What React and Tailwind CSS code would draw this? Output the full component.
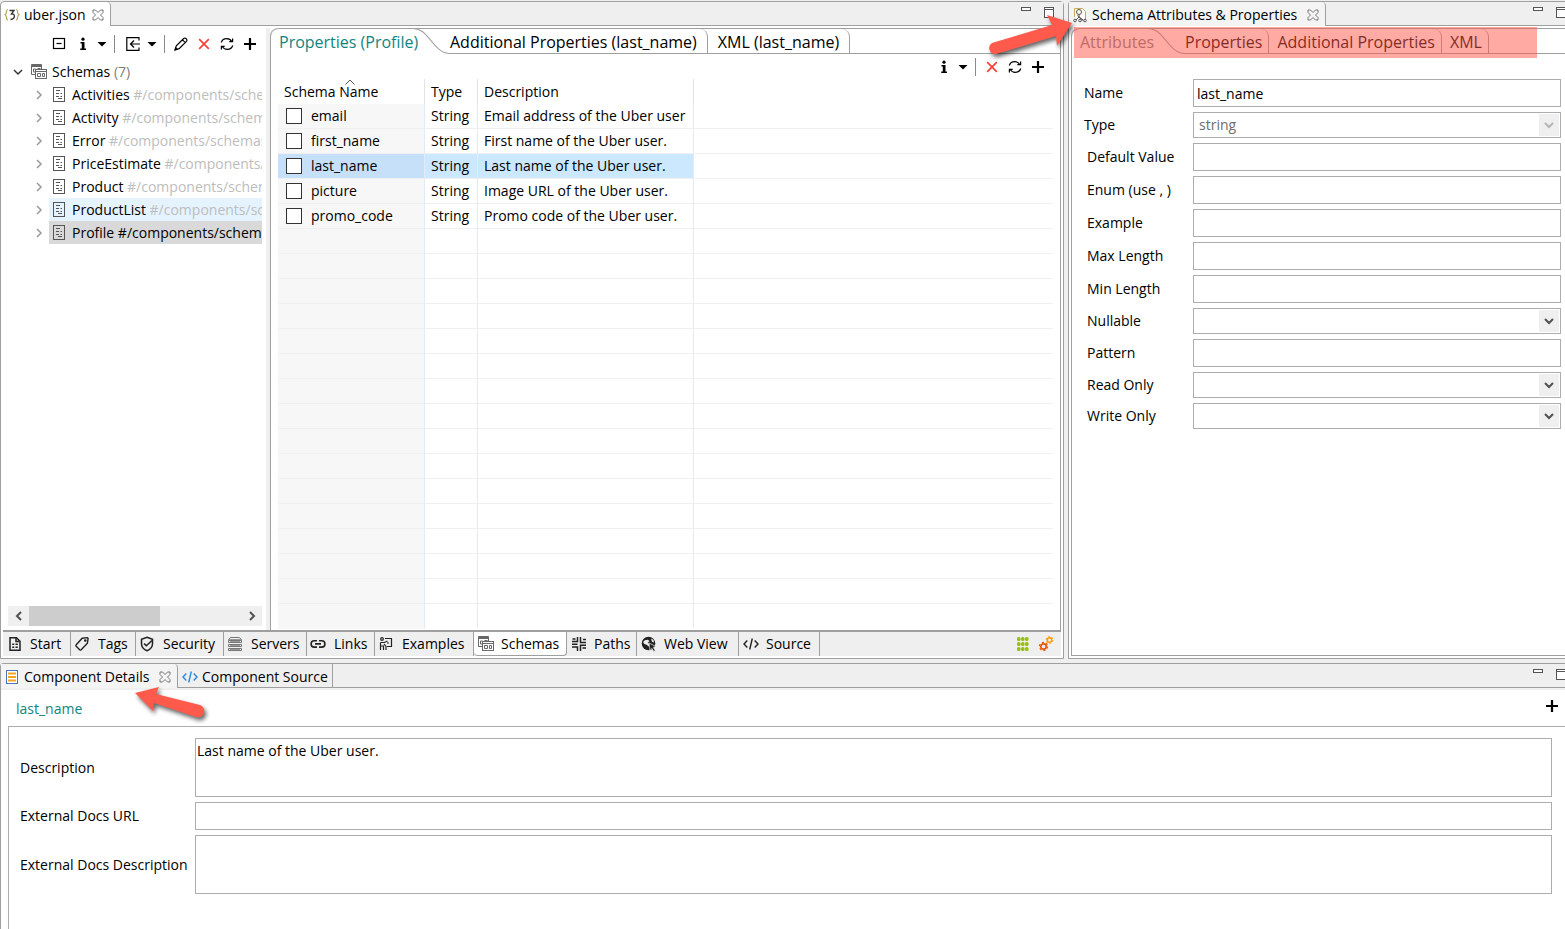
import React, { useState } from 'react';
import clsx from 'clsx';

const schemas = [
  { name: 'Activities', state: '' },
  { name: 'Activity', state: '' },
  { name: 'Error', state: '' },
  { name: 'PriceEstimate', state: '' },
  { name: 'Product', state: '' },
  { name: 'ProductList', state: 'hover' },
  { name: 'Profile', state: 'selected' },
];

const properties = [
  { name: 'email', type: 'String', description: 'Email address of the Uber user' },
  { name: 'first_name', type: 'String', description: 'First name of the Uber user.' },
  { name: 'last_name', type: 'String', description: 'Last name of the Uber user.' },
  { name: 'picture', type: 'String', description: 'Image URL of the Uber user.' },
  { name: 'promo_code', type: 'String', description: 'Promo code of the Uber user.' },
];

const EMPTY_ROWS = 16;

const attributeFields = [
  { id: 'default', label: 'Default Value', kind: 'text' },
  { id: 'enum', label: 'Enum (use , )', kind: 'text' },
  { id: 'example', label: 'Example', kind: 'text' },
  { id: 'maxLength', label: 'Max Length', kind: 'text' },
  { id: 'minLength', label: 'Min Length', kind: 'text' },
  { id: 'nullable', label: 'Nullable', kind: 'select' },
  { id: 'pattern', label: 'Pattern', kind: 'text' },
  { id: 'readOnly', label: 'Read Only', kind: 'select' },
  { id: 'writeOnly', label: 'Write Only', kind: 'select' },
];

/* ---------- icons ---------- */

const Icon = ({ children, className, ...rest }) => (
  <svg
    width="16"
    height="16"
    viewBox="0 0 16 16"
    fill="none"
    stroke="currentColor"
    aria-hidden="true"
    className={clsx('block shrink-0', className)}
    {...rest}
  >
    {children}
  </svg>
);

const CollapseIcon = () => (
  <Icon strokeWidth="1.2">
    <rect x="2.5" y="2.5" width="11" height="10" />
    <path d="M5.500 7.500h5" />
  </Icon>
);

const InfoIcon = () => (
  <Icon fill="currentColor" stroke="none">
    <circle cx="8" cy="3.2" r="1.6" />
    <path d="M5.5 6h4v6.5H11V14H5.2v-1.5h1.6v-5H5.5z" />
  </Icon>
);

const CaretIcon = () => (
  <svg width="10" height="16" viewBox="0 0 10 16" aria-hidden="true" className="block">
    <path d="M.5 6h9L5 10.5z" fill="currentColor" />
  </svg>
);

const ImportIcon = () => (
  <Icon strokeWidth="1.2">
    <path d="M14 4.5V1.7H1.8v12.6H14v-2.8M15 8H6M9 4.5L5.5 8 9 11.5" />
  </Icon>
);

const PencilIcon = () => (
  <Icon strokeWidth="1.2">
    <path d="M2.3 13.7l1-3.8 7.4-7.4c.7-.7 1.6-.6 2.2 0l.6.6c.6.6.6 1.5 0 2.2l-7.4 7.4zM9.5 3.8l2.8 2.8" />
    <path d="M2 14l2-.6L2.6 12z" fill="currentColor" />
  </Icon>
);

const DeleteIcon = () => (
  <Icon stroke="#f44336" strokeWidth="1.7">
    <path d="M3.2 3.2l9.6 9.6M12.8 3.2l-9.6 9.6" />
  </Icon>
);

const RefreshIcon = () => (
  <Icon strokeWidth="1.2">
    <path d="M2.3 6.5C3 4 5.2 2.7 7.8 2.7c2.2 0 3.9 1 5 2.8M13.7 9.5c-.7 2.5-2.9 3.8-5.5 3.8-2.2 0-3.9-1-5-2.8" />
    <path d="M13.6 2.4v3.3h-3.300M2.4 13.6v-3.300h3.3" />
  </Icon>
);

const PlusIcon = () => (
  <Icon strokeWidth="2.2">
    <path d="M8 2v12M2 8h12" />
  </Icon>
);

const SchemasIcon = () => (
  <Icon stroke="#686868" strokeWidth="1">
    <path d="M4 10.5H.5v-10h10V5" />
    <path d="M.5 1.5h10M.5 2.5h10M2.5 5h2v3h-2zM6.5 4.5h3" />
    <rect x="4.5" y="5.5" width="11" height="9" fill="#fff" />
    <path d="M4.5 7.5h11M6.5 9.5h3v3h-3zM11.500 9.5h2v3h-2z" />
  </Icon>
);

const DocIcon = () => (
  <Icon stroke="#555" strokeWidth="1">
    <rect x="2.5" y=".5" width="11" height="14" />
    <path d="M5 3.5h4M5 6.5h3M9.5 6.5h1.5M5 9.5h3M9.5 9.5h1.5M7 11.5h4" />
  </Icon>
);

const JsonIcon = () => (
  <Icon>
    <path d="M4 2.5c-1.500 0-1.500.5-1.500 2s0 2.500-1.500 3.200C2.500 8.500 2.500 9.500 2.500 11s0 2 1.500 2M12 2.500c1.500 0 1.500.5 1.500 2s0 2.500 1.500 3.200c-1.500.8-1.500 1.800-1.500 3.300s0 2-1.500 2" stroke="#b0a558" strokeWidth="1.200" />
    <path d="M5.500 3.500h4.500L7.500 7c4-.5 4 5-1 5.500" stroke="#333" strokeWidth="1.300" />
  </Icon>
);

const CloseTabIcon = () => (
  <svg width="12" height="12" viewBox="0 0 12 12" fill="none" stroke="#777" aria-hidden="true" className="block">
    <path d="M1 1h2.500L6 3.500 8.500 1H11v2.500L8.500 6 11 8.500V11H8.500L6 8.500 3.500 11H1V8.500L3.500 6 1 3.500z" />
  </svg>
);

const StartIcon = () => (
  <Icon strokeWidth="1.500" stroke="#222">
    <path d="M3 1.700h6.500L13 5.200v9.100H3z" />
    <path d="M9 2v3.500h3.500M5.200 8.200h2M8.500 8.200h2.300M5.200 11.200h2M8.500 11.200h2.300" />
  </Icon>
);

const TagIcon = () => (
  <Icon strokeWidth="1.400" stroke="#222" className="-ml-px">
    <path d="M8.200 2.200l5-.6c.6 0 .9.300.9.900l-.7 4.700-6.200 6.500c-.5.500-1 .5-1.500 0L2.200 10.300c-.5-.5-.5-1 0-1.500z" />
    <circle cx="11.300" cy="4.500" r=".6" />
  </Icon>
);

const ShieldIcon = () => (
  <Icon strokeWidth="1.500" stroke="#222" className="-ml-px">
    <path d="M8 1.200l5.500 2v4.500c0 3.500-2.300 5.700-5.500 7-3.200-1.300-5.500-3.500-5.500-7V3.200z" />
    <path d="M5 7.500l2.300 2.300L13 4.500" />
  </Icon>
);

const ServersIcon = () => (
  <Icon stroke="#777" strokeWidth="1" className="-ml-px">
    <path d="M3.500 1.500h9l2 2.500h-13zM1.500 4.500h13v2h-13zM1.500 8.500h13v2h-13zM1.500 12.500h13v2h-13z" />
    <path d="M3 3.500h10M3 5.500h10M3 9.500h10M3 13.500h10" stroke="#999" />
  </Icon>
);

const LinkIcon = () => (
  <Icon strokeWidth="1.600" stroke="#222" className="-ml-px">
    <path d="M7 4.700H4.300a3.200 3.200 0 000 6.400H7M9 4.700h2.700a3.200 3.200 0 010 6.400H9M5 7.900h6" />
  </Icon>
);

const ExamplesIcon = () => (
  <Icon strokeWidth="1.200" stroke="#222" className="-ml-px">
    <circle cx="4" cy="3" r="1.300" />
    <path d="M7 2.500h6.500v8H9M2.500 6.500h4l3-1.500M2.500 6.500V10h3v4M2.500 10v4M6 8l2 2.500V14M9 7h2" />
  </Icon>
);

const PathsIcon = () => (
  <Icon strokeWidth="1.500" stroke="#222">
    <path d="M6.500 1v4.500H1M1.500 3h3M9.500 1v5.500H15M12 3.500h3M1 8.200h5.500M1 11h5.500v4M9.500 15V9.200H15M11.500 12H15" />
  </Icon>
);

const WebIcon = () => (
  <Icon stroke="none">
    <circle cx="7.500" cy="7.500" r="6.800" fill="#222" />
    <path d="M3.500 4.500c1.500-1 2.500-.5 3.500-.8l1.500 1.500-1.800 1.500 2 1.600-1 2.200L6 9 3 7.800 2.200 6zM10 2.500l2.500 1.500.5 2.500-2-.8z" fill="#efefef" />
    <path d="M8 7l7 3.500-2.700.9 2 3-1.500 1-2-3L9 14.500z" fill="#222" stroke="#efefef" strokeWidth=".7" />
  </Icon>
);

const CodeIcon = ({ color = '#222' }) => (
  <Icon strokeWidth="1.400" stroke={color}>
    <path d="M4.300 4.500L1 8l3.300 3.500M11.700 4.500L15 8l-3.300 3.500M9.300 2.500l-2.600 11" />
  </Icon>
);

const DetailsIcon = () => (
  <Icon>
    <rect x="2.500" y="1.500" width="11" height="13" fill="#fff" stroke="#4a76b8" />
    <path d="M4 4.500h8M4 8h8M4 11.500h8" stroke="#f5a623" strokeWidth="2" />
  </Icon>
);

const AttributesIcon = () => (
  <Icon strokeWidth="1">
    <path d="M2.500 10V1.500h8l3 3V12" stroke="#c9a85c" fill="#fffdf5" />
    <circle cx="7" cy="5" r="2.500" stroke="#555" />
    <path d="M7 7.500v3M4 13l3-3 4 3M5.500 8.500l6 5.500" stroke="#555" />
    <circle cx="3" cy="13.500" r="1.300" stroke="#555" />
    <circle cx="8" cy="13.500" r="1.300" stroke="#555" />
    <circle cx="13" cy="13.500" r="1.300" stroke="#555" />
  </Icon>
);

const GridIcon = () => (
  <Icon stroke="none" fill="#97bf0d">
    {[3, 8, 13].map((y) => [4, 8, 12].map((x) => <rect key={`${x}-${y}`} x={x - 2} y={y - 2} width="3.500" height="4" rx="1.500" />))}
  </Icon>
);

const GearsIcon = () => (
  <Icon>
    <circle cx="5.500" cy="10.500" r="2.700" stroke="#e8590c" strokeWidth="1.700" />
    <circle cx="5.500" cy="10.500" r="4" stroke="#e8590c" strokeWidth="1.300" strokeDasharray="2.100 2.090" />
    <circle cx="11.500" cy="4" r="2.200" stroke="#ff9d0a" strokeWidth="1.400" />
    <circle cx="11.500" cy="4" r="3.300" stroke="#ff9d0a" strokeWidth="1.100" strokeDasharray="1.730 1.730" />
  </Icon>
);

const ChevronIcon = ({ dir = 'right', className }) => (
  <svg width="12" height="12" viewBox="0 0 12 12" fill="none" stroke="currentColor" strokeWidth="1.500" aria-hidden="true" className={clsx('block shrink-0', className)}>
    {dir === 'right' && <path d="M4 2l4 4-4 4" />}
    {dir === 'left' && <path d="M8 2L4 6l4 4" />}
    {dir === 'down' && <path d="M2 4l4 4 4-4" />}
  </svg>
);

/* ---------- shared parts ---------- */

const Separator = () => <span className="h-[18px] w-px shrink-0 bg-[#8a8a8a]" />;

const ToolButton = ({ label, children, narrow }) => (
  <button type="button" aria-label={label} className={clsx('flex h-5 shrink-0 items-center justify-center', narrow ? 'w-4' : 'w-[23px]')}>
    {children}
  </button>
);

const WindowButtons = ({ className }) => (
  <div className={clsx('ml-auto flex shrink-0 items-start gap-[13px] pt-[5px]', className)}>
    <button type="button" aria-label="Minimize" className="h-1 w-[10px] border border-[#555] bg-white" />
    <button type="button" aria-label="Maximize" className="flex h-[11px] w-[10px] flex-col border border-[#555] bg-white pt-px">
      <span className="block h-px w-full bg-[#555]" />
    </button>
  </div>
);

// Slanted edge between the selected tab and its neighbour
const TabCurve = () => (
  <svg width="37" height="25" viewBox="0 0 37 25" fill="none" stroke="#9f9f9f" aria-hidden="true" className="-mt-px -mb-px block h-[26px] shrink-0" preserveAspectRatio="none">
    <path d="M0 .5C7 .5 11 4 17 11S28 24.500 37 24.500" />
  </svg>
);

const FolderTabs = ({ tabs, active, onSelect, activeClass, firstWidth, endPad, startPad }) => (
  <div role="tablist" className="flex h-[26px] shrink-0 rounded-tl-lg border-t border-[#9f9f9f] text-[16px] leading-6 whitespace-nowrap">
    {tabs.map((tab, index) => (
      <React.Fragment key={tab}>
        <button
          type="button"
          role="tab"
          aria-selected={active === index}
          onClick={() => onSelect(index)}
          className={clsx(
            'shrink-0 text-left',
            index === 0 ? clsx('pl-2', firstWidth, activeClass) : clsx('rounded-tr-lg border-r border-b border-[#9f9f9f] pt-px', endPad),
            index > 1 && startPad
          )}
        >
          {tab}
        </button>
        {index === 0 && <TabCurve />}
      </React.Fragment>
    ))}
    <div className="flex-1 border-b border-[#9f9f9f]" />
  </div>
);

const TextField = ({ id, label, value }) => (
  <div className="flex items-center">
    <label htmlFor={id} className="w-[109px] shrink-0">{label}</label>
    <input id={id} type="text" defaultValue={value} className="h-7 min-w-0 flex-1 border border-[#abadb3] bg-white px-[3px] outline-none" />
  </div>
);

const SelectField = ({ id, label, value, disabled }) => (
  <div className="flex items-center">
    <label htmlFor={id} className="w-[109px] shrink-0">{label}</label>
    <div className="relative h-[26px] min-w-0 flex-1 border border-[#abadb3] bg-white">
      <select id={id} disabled={disabled} defaultValue={value} className="h-full w-full appearance-none px-[5px] text-black outline-none disabled:text-[#6d6d6d] disabled:opacity-100">
        {value ? <option>{value}</option> : <option value="" />}
        {!value && <option>true</option>}
        {!value && <option>false</option>}
      </select>
      <span className={clsx('pointer-events-none absolute top-px right-px bottom-px flex w-5 items-center justify-center bg-[#efefef]', disabled ? 'text-[#b5b5b5]' : 'text-[#505050]')}>
        <ChevronIcon dir="down" className="stroke-2" />
      </span>
    </div>
  </div>
);

/* ---------- schema tree ---------- */

const SchemaTree = () => (
  <aside className="flex w-[261px] shrink-0 flex-col overflow-hidden pl-[7px]">
    <div className="flex h-[34px] items-center justify-end pt-[2px] pr-px">
      <ToolButton label="Collapse all"><CollapseIcon /></ToolButton>
      <span className="w-px" />
      <ToolButton label="Info"><InfoIcon /></ToolButton>
      <ToolButton label="Info menu" narrow><CaretIcon /></ToolButton>
      <span className="w-1" />
      <Separator />
      <span className="w-[6px]" />
      <ToolButton label="Import"><ImportIcon /></ToolButton>
      <ToolButton label="Import menu" narrow><CaretIcon /></ToolButton>
      <span className="w-1" />
      <Separator />
      <span className="w-1" />
      <ToolButton label="Edit"><PencilIcon /></ToolButton>
      <ToolButton label="Delete"><DeleteIcon /></ToolButton>
      <ToolButton label="Refresh"><RefreshIcon /></ToolButton>
      <ToolButton label="Add"><PlusIcon /></ToolButton>
    </div>
    <ul className="flex-1 whitespace-nowrap">
      <li className="flex h-[23px] items-center pl-1">
        <ChevronIcon dir="down" className="text-[#333]" />
        <span className="w-[7px]" />
        <SchemasIcon />
        <span className="pl-[5px]">
          Schemas <span className="text-[#808080]">(7)</span>
        </span>
      </li>
      {schemas.map((schema) => (
        <li key={schema.name} className="flex h-[23px] items-center pl-[25px]">
          <ChevronIcon className="text-[#999]" />
          <div
            className={clsx(
              'ml-1 flex h-full min-w-0 flex-1 items-center overflow-hidden pl-[2px]',
              schema.state === 'hover' && 'bg-[#e5f3ff]',
              schema.state === 'selected' && 'bg-[#d9d9d9]'
            )}
          >
            <DocIcon />
            <span className="pl-[5px]">
              {schema.name}{' '}
              <span className={schema.state === 'selected' ? 'text-black' : 'text-[#bdbdbd]'}>#/components/schemas</span>
            </span>
          </div>
        </li>
      ))}
    </ul>
    <div className="mb-1 flex h-5 items-center bg-[#efefef] text-[#505050]">
      <button type="button" aria-label="Scroll left" className="flex w-[21px] justify-center"><ChevronIcon dir="left" className="stroke-2" /></button>
      <div className="flex h-full flex-1">
        <div className="h-full w-[62%] bg-[#cdcdcd]" />
      </div>
      <button type="button" aria-label="Scroll right" className="flex w-[21px] justify-center"><ChevronIcon className="stroke-2" /></button>
    </div>
  </aside>
);

/* ---------- properties table ---------- */

const PropertiesTable = () => (
  <table className="w-full table-fixed border-separate border-spacing-0 text-left">
    <colgroup>
      <col className="w-[147px]" />
      <col className="w-[53px]" />
      <col className="w-[216px]" />
      <col />
    </colgroup>
    <thead>
      <tr className="h-[25px]">
        <th className="relative border-r border-[#e3e3e3] p-0 pl-[6px] font-normal">
          Schema Name
          <svg width="10" height="6" viewBox="0 0 10 6" fill="none" stroke="#555" aria-hidden="true" className="absolute top-0 left-[46%]">
            <path d="M.5 5.500L5 1l4.500 4.500" />
          </svg>
        </th>
        <th className="border-r border-[#e3e3e3] p-0 pl-[6px] font-normal">Type</th>
        <th className="border-r border-[#e3e3e3] p-0 pl-[6px] font-normal">Description</th>
        <th className="p-0" />
      </tr>
    </thead>
    <tbody>
      {properties.map((property) => {
        const selected = property.name === 'last_name';
        return (
          <tr key={property.name} className="h-[25px] whitespace-nowrap">
            <td className={clsx('border-r border-b border-r-[#e3ebf7] border-b-[#f0f0f0] p-0', selected ? 'bg-[#c5e0f8]' : 'bg-[#f7f7f7]')}>
              <label className="flex items-center gap-[9px] pl-2">
                <input type="checkbox" className="h-4 w-4 shrink-0 appearance-none border border-[#333] bg-white checked:bg-[#0078d7]" />
                {property.name}
              </label>
            </td>
            <td className={clsx('border-r border-b border-r-[#e3ebf7] border-b-[#f0f0f0] p-0 pl-[6px]', selected && 'bg-[#cce8ff]')}>{property.type}</td>
            <td className={clsx('border-r border-b border-r-[#e3ebf7] border-b-[#f0f0f0] p-0 pl-[6px]', selected && 'bg-[#cce8ff]')}>{property.description}</td>
            <td className="border-b border-[#f0f0f0] p-0" />
          </tr>
        );
      })}
      {Array.from({ length: EMPTY_ROWS }, (_, i) => (
        <tr key={i} className="h-[25px] last:[&_td]:border-b-transparent">
          <td className="border-r border-b border-r-[#e3ebf7] border-b-[#f0f0f0] bg-[#f7f7f7] p-0" />
          <td className="border-r border-b border-r-[#e3ebf7] border-b-[#f0f0f0] p-0" />
          <td className="border-r border-b border-r-[#e3ebf7] border-b-[#f0f0f0] p-0" />
          <td className="border-b border-[#f0f0f0] p-0" />
        </tr>
      ))}
    </tbody>
  </table>
);

/* ---------- editor ---------- */

const editorPages = [
  { label: 'Start', icon: StartIcon, width: 'w-[68px]' },
  { label: 'Tags', icon: TagIcon, width: 'w-[65px]' },
  { label: 'Security', icon: ShieldIcon, width: 'w-[88px]' },
  { label: 'Servers', icon: ServersIcon, width: 'w-[83px]' },
  { label: 'Links', icon: LinkIcon, width: 'w-[68px]' },
  { label: 'Examples', icon: ExamplesIcon, width: 'w-[99px]' },
  { label: 'Schemas', icon: SchemasIcon, width: 'w-[93px]' },
  { label: 'Paths', icon: PathsIcon, width: 'w-[70px]' },
  { label: 'Web View', icon: WebIcon, width: 'w-[102px]' },
  { label: 'Source', icon: CodeIcon, width: 'w-[81px]' },
];

const Editor = () => {
  const [tab, setTab] = useState(0);
  const [page, setPage] = useState('Schemas');

  return (
    <section className="flex min-w-0 flex-col rounded-t border border-[#9f9f9f] bg-white">
      <div className="flex h-6 shrink-0">
        <div className="flex items-center rounded-tr border-r border-[#9f9f9f] pt-px pr-[6px] pl-[3px]">
          <JsonIcon />
          <span className="pr-[6px] pl-1">uber.json</span>
          <button type="button" aria-label="Close uber.json"><CloseTabIcon /></button>
        </div>
        <div className="flex flex-1 border-b border-[#9f9f9f] bg-[#efefef]">
          <WindowButtons className="pr-[9px]" />
        </div>
      </div>

      <div className="flex flex-1">
        <SchemaTree />
        <div className="mt-[2px] ml-1 flex min-w-0 flex-1 flex-col border-l-4 border-[#efefef] pr-[2px]">
          <div className="flex flex-1 flex-col rounded-tl-lg border-r border-l border-[#9f9f9f]">
            <FolderTabs
              tabs={['Properties (Profile)', 'Additional Properties (last_name)', 'XML (last_name)']}
              active={tab}
              onSelect={setTab}
              activeClass="text-[#0f8580]"
              firstWidth="w-[142px]"
              startPad="pl-[10px]"
              endPad="pr-[10px]"
            />
            <div className="flex h-[25px] items-center justify-end pr-[11px]">
              <ToolButton label="Info"><InfoIcon /></ToolButton>
              <ToolButton label="Info menu" narrow><CaretIcon /></ToolButton>
              <span className="w-1" />
              <Separator />
              <span className="w-1" />
              <ToolButton label="Delete"><DeleteIcon /></ToolButton>
              <ToolButton label="Refresh"><RefreshIcon /></ToolButton>
              <ToolButton label="Add"><PlusIcon /></ToolButton>
            </div>
            <div className="px-[7px] pb-px">
              <PropertiesTable />
            </div>
          </div>
        </div>
      </div>

      <div className="mx-[2px] mb-[2px] flex h-[26px] shrink-0 border-t-2 border-[#9f9f9f] bg-[#efefef]">
        {editorPages.map(({ label, icon: PageIcon, width }) => (
          <button
            key={label}
            type="button"
            onClick={() => setPage(label)}
            className={clsx(
              'flex shrink-0 items-center border-r border-[#9f9f9f] pl-1 whitespace-nowrap',
              width,
              page === label && 'rounded-b-sm border-b bg-white'
            )}
          >
            <span className="w-[23px]"><PageIcon /></span>
            {label}
          </button>
        ))}
        <div className="ml-auto flex items-center gap-[7px] pr-[7px]">
          <button type="button" aria-label="Palette"><GridIcon /></button>
          <button type="button" aria-label="Settings"><GearsIcon /></button>
        </div>
      </div>
    </section>
  );
};

/* ---------- attributes view ---------- */

const AttributesView = () => {
  const [tab, setTab] = useState(0);

  return (
    <section className="flex min-w-0 flex-col rounded-tl border border-r-0 border-[#9f9f9f] bg-white">
      <div className="flex h-6 shrink-0 overflow-hidden">
        <div className="flex shrink-0 items-center rounded-tr border-r border-[#9f9f9f] bg-[#f4f4f4] pt-px pr-[6px] pl-[3px] whitespace-nowrap">
          <AttributesIcon />
          <span className="pr-[10px] pl-1">Schema Attributes &amp; Properties</span>
          <button type="button" aria-label="Close view"><CloseTabIcon /></button>
        </div>
        <div className="flex flex-1 border-b border-[#9f9f9f] bg-[#efefef]">
          <WindowButtons className="-mr-px" />
        </div>
      </div>
      <div className="relative mt-[2px] mb-[2px] ml-[2px] flex flex-1 flex-col rounded-tl-lg border-b border-l border-[#9f9f9f]">
        <FolderTabs
          tabs={['Attributes', 'Properties', 'Additional Properties', 'XML']}
          active={tab}
          onSelect={setTab}
          activeClass="text-[#808080]"
          firstWidth="w-[76px]"
          startPad="pl-2"
          endPad="pr-[6px]"
        />
        {/* highlight drawn over the tab strip */}
        <div className="pointer-events-none absolute -top-px right-[28px] left-[2px] h-[31px] bg-[#ff5548]/50" />
        <div className="flex flex-col gap-[5px] pt-[25px] pr-1 pl-3">
          <TextField id="name" label="Name" value="last_name" />
          <SelectField id="type" label="Type" value="string" disabled />
        </div>
        <div className="flex flex-col gap-[5px] pt-[5px] pr-1 pl-[15px] [&_label]:w-[106px]">
          {attributeFields.map((field) =>
            field.kind === 'select' ? (
              <SelectField key={field.id} id={field.id} label={field.label} />
            ) : (
              <TextField key={field.id} id={field.id} label={field.label} />
            )
          )}
        </div>
      </div>
    </section>
  );
};

/* ---------- component details ---------- */

const DetailsView = () => (
  <section className="flex flex-1 flex-col rounded-tl border-t border-l border-[#9f9f9f] bg-white">
    <div className="flex h-[26px] shrink-0 overflow-hidden border-b-2 border-[#efefef] bg-[#efefef]">
      <div className="flex w-[177px] shrink-0 items-center rounded-tr border-r border-[#9f9f9f] bg-[#f4f4f4] pt-px pl-[3px] whitespace-nowrap">
        <DetailsIcon />
        <span className="flex-1 pl-1">Component Details</span>
        <button type="button" aria-label="Close view" className="pr-[6px]"><CloseTabIcon /></button>
      </div>
      <button type="button" className="flex w-[155px] shrink-0 items-center border-r border-b border-[#9f9f9f] pt-[2px] pl-1 whitespace-nowrap">
        <CodeIcon color="#2b88d8" />
        <span className="pl-1">Component Source</span>
      </button>
      <div className="flex flex-1 border-b border-[#9f9f9f]">
        <WindowButtons className="-mr-px" />
      </div>
    </div>
    <div className="flex h-9 shrink-0 items-start justify-between pt-[6px] pr-[2px] pl-[15px]">
      <h2 className="pt-[3px]">
        <span className="text-[#0f8580]">last_name</span>
      </h2>
      <ToolButton label="Add"><PlusIcon /></ToolButton>
    </div>
    <div className="ml-[7px] flex flex-1 flex-col gap-[5px] border-t border-l border-[#abadb3] pt-[11px] pr-[13px] pl-[11px]">
      <div className="flex items-center">
        <label htmlFor="description" className="w-[175px] shrink-0 whitespace-nowrap">Description</label>
        <textarea id="description" defaultValue="Last name of the Uber user." className="block h-[59px] flex-1 resize-none border border-[#abadb3] px-px py-[2px] outline-none" />
      </div>
      <div className="flex items-center">
        <label htmlFor="docsUrl" className="w-[175px] shrink-0 whitespace-nowrap">External Docs URL</label>
        <input id="docsUrl" type="text" className="h-7 min-w-0 flex-1 border border-[#abadb3] px-px outline-none" />
      </div>
      <div className="flex items-center">
        <label htmlFor="docsDescription" className="w-[175px] shrink-0 whitespace-nowrap">External Docs Description</label>
        <textarea id="docsDescription" className="block h-[59px] flex-1 resize-none border border-[#abadb3] px-px py-[2px] outline-none" />
      </div>
    </div>
  </section>
);

const App = () => (
  <div className="flex min-h-screen flex-col gap-1 overflow-hidden bg-[#efefef] pt-px font-['Open_Sans','Noto_Sans',sans-serif] text-[14px] leading-5 text-black">
    <div className="relative grid grid-cols-[1064fr_497fr] gap-1">
      <Editor />
      <AttributesView />
      {/* pointer to the attributes view */}
      <svg width="96" height="50" viewBox="0 0 96 50" aria-hidden="true" className="pointer-events-none absolute top-[9px] right-[485px] drop-shadow-[2px_3px_2px_rgba(0,0,0,0.6)]">
        <path d="M88 13L63 5l5 10L8 33a6 6 0 004 11l60-18 1 10z" fill="#ff5a4b" />
      </svg>
    </div>
    <div className="relative flex flex-1 flex-col">
      <DetailsView />
      {/* pointer to the details tab */}
      <svg width="84" height="44" viewBox="0 0 84 44" aria-hidden="true" className="pointer-events-none absolute top-[19px] left-[130px] drop-shadow-[2px_3px_2px_rgba(0,0,0,0.6)]">
        <path d="M5 11l24-6-3 7 44 11a6 6 0 01-4 12L24 21l-1 8z" fill="#ff5a4b" />
      </svg>
    </div>
  </div>
);

export default App;
